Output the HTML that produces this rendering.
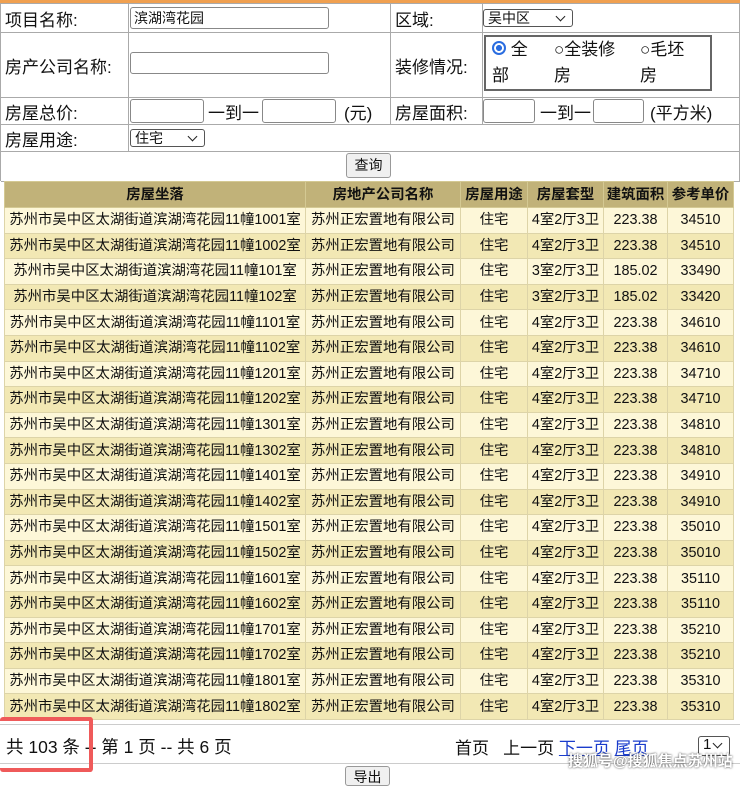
<!DOCTYPE html>
<html><head><meta charset="utf-8"><style>
body{margin:0;width:740px;height:776px;overflow:hidden;background:#fff;font-family:"Liberation Sans","Noto Sans CJK SC",sans-serif;font-size:17px;color:#111;position:relative}
.top{position:absolute;left:0;top:0;width:740px;height:3px;background:#f0a050}
.f{position:absolute;border-left:1px solid #aaa;border-top:1px solid #aaa;box-sizing:border-box}
.c{position:absolute;border-right:1px solid #aaa;border-bottom:1px solid #aaa;box-sizing:border-box;display:flex;align-items:center;padding-left:4px;white-space:nowrap}
.in{position:absolute;border:1px solid #888;border-radius:3px;background:#fff;box-sizing:border-box;font-size:14px;padding-left:3px;line-height:20px}
.sel{position:absolute;border:1px solid #555;border-radius:3px;background:#fff;box-sizing:border-box;font-size:14px;padding-left:4px;line-height:16px}
.sel:after{content:"";position:absolute;right:8px;top:3px;width:6px;height:6px;border-right:1.5px solid #222;border-bottom:1.5px solid #222;transform:rotate(45deg)}
table{position:absolute;left:4px;top:181px;border-collapse:collapse;font-size:14.4px}
td,th{border:1px solid #ddd4a8;height:24.6px;padding:0;text-align:center;white-space:nowrap;vertical-align:middle;line-height:16px}
th{background:#c1b279;font-weight:bold;height:25px;border-color:#d4c993}
tr:nth-child(even) td{background:#fdf7d8}
tr:nth-child(odd) td{background:#f2e8b4}
.btn{position:absolute;border:1px solid #999;border-radius:3px;background:#f0f0f0;font-size:14px;text-align:center;box-sizing:border-box}
a{color:#1a3ccc;text-decoration:underline}
</style></head><body>
<div class="top"></div>
<div class="f" style="left:0;top:3px;width:740px;height:178px">
<div class="c" style="left:0;top:0;width:128px;height:29px">项目名称:</div>
<div class="c" style="left:128px;top:0;width:262px;height:29px"></div>
<div class="c" style="left:390px;top:0;width:92px;height:29px">区域:</div>
<div class="c" style="left:482px;top:0;width:257px;height:29px"></div>
<div class="c" style="left:0;top:29px;width:128px;height:65px">房产公司名称:</div>
<div class="c" style="left:128px;top:29px;width:262px;height:65px"></div>
<div class="c" style="left:390px;top:29px;width:92px;height:65px">装修情况:</div>
<div class="c" style="left:482px;top:29px;width:257px;height:65px"></div>
<div class="c" style="left:0;top:94px;width:128px;height:27px">房屋总价:</div>
<div class="c" style="left:128px;top:94px;width:262px;height:27px"></div>
<div class="c" style="left:390px;top:94px;width:92px;height:27px">房屋面积:</div>
<div class="c" style="left:482px;top:94px;width:257px;height:27px"></div>
<div class="c" style="left:0;top:121px;width:128px;height:27px">房屋用途:</div>
<div class="c" style="left:128px;top:121px;width:611px;height:27px"></div>
<div class="c" style="left:0;top:148px;width:739px;height:30px"></div>
</div>
<div class="in" style="left:130px;top:7px;width:199px;height:22px">滨湖湾花园</div>
<div class="sel" style="left:483px;top:9px;width:90px;height:18px">吴中区</div>
<div class="in" style="left:130px;top:52px;width:199px;height:22px"></div>
<div style="position:absolute;left:484px;top:35px;width:228px;height:56px;border:2px solid #666;box-sizing:border-box;font-size:17px;line-height:26px">
<div style="position:absolute;left:6px;top:0"><span style="display:inline-block;width:10px;height:10px;border-radius:50%;border:2px solid #2a6de0;background:radial-gradient(#2a6de0 40%,#fff 45%);vertical-align:0"></span> 全<br>部</div>
<div style="position:absolute;left:68px;top:0">○全装修<br>房</div>
<div style="position:absolute;left:154px;top:0">○毛坯<br>房</div>
</div>
<div class="in" style="left:130px;top:99px;width:74px;height:24px"></div>
<div style="position:absolute;left:208px;top:99px">一到一</div>
<div class="in" style="left:262px;top:99px;width:74px;height:24px"></div>
<div style="position:absolute;left:344px;top:99px">(元)</div>
<div class="in" style="left:483px;top:99px;width:52px;height:24px"></div>
<div style="position:absolute;left:540px;top:99px">一到一</div>
<div class="in" style="left:593px;top:99px;width:51px;height:24px"></div>
<div style="position:absolute;left:650px;top:99px">(平方米)</div>
<div class="sel" style="left:130px;top:129px;width:75px;height:18px">住宅</div>
<div class="btn" style="left:346px;top:153px;width:45px;height:25px;line-height:23px">查询</div>
<table>
<tr><th style="width:300px">房屋坐落</th><th style="width:154px">房地产公司名称</th><th style="width:66px">房屋用途</th><th style="width:75px">房屋套型</th><th style="width:63px">建筑面积</th><th style="width:65px">参考单价</th></tr>
<tr><td>苏州市吴中区太湖街道滨湖湾花园11幢1001室</td><td>苏州正宏置地有限公司</td><td>住宅</td><td>4室2厅3卫</td><td>223.38</td><td>34510</td></tr>
<tr><td>苏州市吴中区太湖街道滨湖湾花园11幢1002室</td><td>苏州正宏置地有限公司</td><td>住宅</td><td>4室2厅3卫</td><td>223.38</td><td>34510</td></tr>
<tr><td>苏州市吴中区太湖街道滨湖湾花园11幢101室</td><td>苏州正宏置地有限公司</td><td>住宅</td><td>3室2厅3卫</td><td>185.02</td><td>33490</td></tr>
<tr><td>苏州市吴中区太湖街道滨湖湾花园11幢102室</td><td>苏州正宏置地有限公司</td><td>住宅</td><td>3室2厅3卫</td><td>185.02</td><td>33420</td></tr>
<tr><td>苏州市吴中区太湖街道滨湖湾花园11幢1101室</td><td>苏州正宏置地有限公司</td><td>住宅</td><td>4室2厅3卫</td><td>223.38</td><td>34610</td></tr>
<tr><td>苏州市吴中区太湖街道滨湖湾花园11幢1102室</td><td>苏州正宏置地有限公司</td><td>住宅</td><td>4室2厅3卫</td><td>223.38</td><td>34610</td></tr>
<tr><td>苏州市吴中区太湖街道滨湖湾花园11幢1201室</td><td>苏州正宏置地有限公司</td><td>住宅</td><td>4室2厅3卫</td><td>223.38</td><td>34710</td></tr>
<tr><td>苏州市吴中区太湖街道滨湖湾花园11幢1202室</td><td>苏州正宏置地有限公司</td><td>住宅</td><td>4室2厅3卫</td><td>223.38</td><td>34710</td></tr>
<tr><td>苏州市吴中区太湖街道滨湖湾花园11幢1301室</td><td>苏州正宏置地有限公司</td><td>住宅</td><td>4室2厅3卫</td><td>223.38</td><td>34810</td></tr>
<tr><td>苏州市吴中区太湖街道滨湖湾花园11幢1302室</td><td>苏州正宏置地有限公司</td><td>住宅</td><td>4室2厅3卫</td><td>223.38</td><td>34810</td></tr>
<tr><td>苏州市吴中区太湖街道滨湖湾花园11幢1401室</td><td>苏州正宏置地有限公司</td><td>住宅</td><td>4室2厅3卫</td><td>223.38</td><td>34910</td></tr>
<tr><td>苏州市吴中区太湖街道滨湖湾花园11幢1402室</td><td>苏州正宏置地有限公司</td><td>住宅</td><td>4室2厅3卫</td><td>223.38</td><td>34910</td></tr>
<tr><td>苏州市吴中区太湖街道滨湖湾花园11幢1501室</td><td>苏州正宏置地有限公司</td><td>住宅</td><td>4室2厅3卫</td><td>223.38</td><td>35010</td></tr>
<tr><td>苏州市吴中区太湖街道滨湖湾花园11幢1502室</td><td>苏州正宏置地有限公司</td><td>住宅</td><td>4室2厅3卫</td><td>223.38</td><td>35010</td></tr>
<tr><td>苏州市吴中区太湖街道滨湖湾花园11幢1601室</td><td>苏州正宏置地有限公司</td><td>住宅</td><td>4室2厅3卫</td><td>223.38</td><td>35110</td></tr>
<tr><td>苏州市吴中区太湖街道滨湖湾花园11幢1602室</td><td>苏州正宏置地有限公司</td><td>住宅</td><td>4室2厅3卫</td><td>223.38</td><td>35110</td></tr>
<tr><td>苏州市吴中区太湖街道滨湖湾花园11幢1701室</td><td>苏州正宏置地有限公司</td><td>住宅</td><td>4室2厅3卫</td><td>223.38</td><td>35210</td></tr>
<tr><td>苏州市吴中区太湖街道滨湖湾花园11幢1702室</td><td>苏州正宏置地有限公司</td><td>住宅</td><td>4室2厅3卫</td><td>223.38</td><td>35210</td></tr>
<tr><td>苏州市吴中区太湖街道滨湖湾花园11幢1801室</td><td>苏州正宏置地有限公司</td><td>住宅</td><td>4室2厅3卫</td><td>223.38</td><td>35310</td></tr>
<tr><td>苏州市吴中区太湖街道滨湖湾花园11幢1802室</td><td>苏州正宏置地有限公司</td><td>住宅</td><td>4室2厅3卫</td><td>223.38</td><td>35310</td></tr>
</table>
<div style="position:absolute;left:0;top:724px;width:740px;height:40px;border-top:1px solid #ccc;border-bottom:1px solid #ccc;box-sizing:border-box"></div>
<div style="position:absolute;left:6px;top:734px;font-size:17.5px">共 103 条 -- 第 1 页 -- 共 6 页</div>
<div style="position:absolute;left:0;top:717px;width:93px;height:55px;border:4px solid #ef5a5a;border-left:none;border-radius:3px;box-sizing:border-box"></div>
<div style="position:absolute;left:455px;top:734px;font-size:17px">首页 &nbsp; 上一页 <a>下一页</a> <a>尾页</a></div>
<div class="sel" style="left:698px;top:736px;width:32px;height:20px;font-size:15px">1</div>
<div style="position:absolute;left:568px;top:750px;font-size:15px;color:#fff;font-weight:bold;text-shadow:0 0 2px #333">搜狐号@搜狐焦点苏州站</div>
<div class="btn" style="left:345px;top:766px;width:45px;height:20px">导出</div>
</body></html>
